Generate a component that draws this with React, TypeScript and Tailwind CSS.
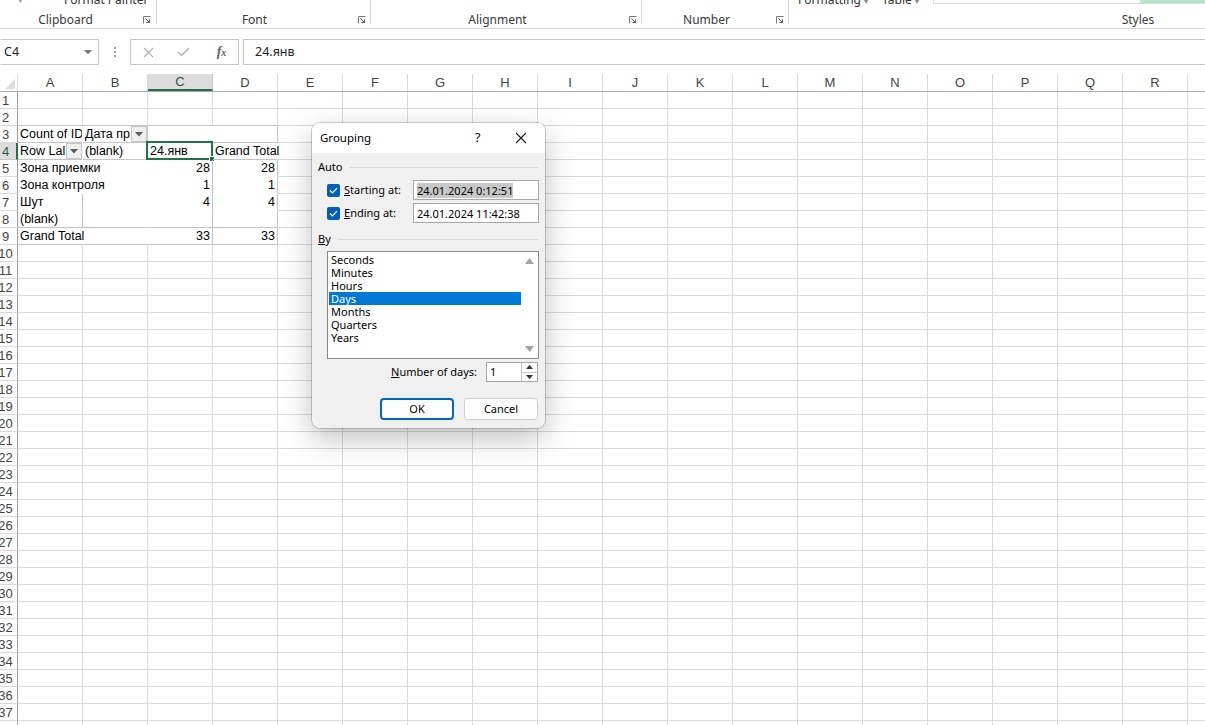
import React from "react";

const COLS = ["A","B","C","D","E","F","G","H","I","J","K","L","M","N","O","P","Q","R","S"];
const ROWS = Array.from({ length: 38 }, (_, i) => i + 1);

const R_GRID = "border-r border-r-[#dadada]";
const R_PIV = "border-r border-r-[#c4c4c4]";
const R_NONE = "border-r border-r-transparent";
const B_GRID = "border-b border-b-[#dadada]";
const B_PIV = "border-b border-b-[#c4c4c4]";
const B_NONE = "border-b border-b-transparent";

type CellDef = { text: string; right?: boolean; dd?: boolean; clip?: boolean; sel?: boolean };

const PIVOT: Record<string, CellDef> = {
  "3-0": { text: "Count of ID", clip: true },
  "3-1": { text: "Дата пр", clip: true, dd: true },
  "4-0": { text: "Row Lal", clip: true, dd: true },
  "4-1": { text: "(blank)" },
  "4-2": { text: "24.янв", sel: true },
  "4-3": { text: "Grand Total" },
  "5-0": { text: "Зона приемки" },
  "5-2": { text: "28", right: true },
  "5-3": { text: "28", right: true },
  "6-0": { text: "Зона контроля" },
  "6-2": { text: "1", right: true },
  "6-3": { text: "1", right: true },
  "7-0": { text: "Шут" },
  "7-2": { text: "4", right: true },
  "7-3": { text: "4", right: true },
  "8-0": { text: "(blank)" },
  "9-0": { text: "Grand Total" },
  "9-2": { text: "33", right: true },
  "9-3": { text: "33", right: true },
};

function inPivot(r: number, c: number) {
  return r >= 3 && r <= 9 && c <= 3;
}

function rightCls(r: number, c: number) {
  if (!inPivot(r, c)) return R_GRID;
  if (c === 3) return r === 4 ? R_NONE : R_PIV;
  if (c === 2) return r >= 4 ? R_PIV : R_NONE;
  if (c === 1) return r === 3 ? R_PIV : R_NONE;
  if (r === 7 || r === 8) return R_PIV;
  return R_NONE;
}

function bottomCls(r: number, c: number) {
  if (r === 2 && c <= 3) return B_PIV;
  if (!inPivot(r, c)) return B_GRID;
  if (r === 3 || r === 4 || r === 8 || r === 9) return B_PIV;
  return B_NONE;
}

function DropBtn() {
  return (
    <div className="w-[16px] h-[16px] shrink-0 bg-[#efefef] border border-[#c8c8c8] flex items-center justify-center">
      <svg width="8" height="5" viewBox="0 0 8 5">
        <polygon points="0,0 8,0 4,4.5" fill="#5a5a5a" />
      </svg>
    </div>
  );
}

function Launcher() {
  return (
    <svg width="8" height="8" viewBox="0 0 8 8" className="shrink-0">
      <path d="M0.5 7.5V0.5H7.5" fill="none" stroke="#7a7a7a" strokeWidth="1" />
      <path d="M2.5 2.5L6.5 6.5M6.5 3.5V6.5H3.5" fill="none" stroke="#5a5a5a" strokeWidth="1" />
    </svg>
  );
}

function Ribbon() {
  return (
    <div className="h-[29px] border-b border-b-[#d6d6d6] flex font-['Noto_Sans'] text-[12px] text-[#3a3a3a]">
      {/* Clipboard */}
      <div className="w-[157px] flex shrink-0">
        <div className="flex-1 flex flex-col h-[28px]">
          <div className="h-[12px]">
            <div className="flex items-center -mt-[9px] whitespace-nowrap">
              <div className="w-[48px] shrink-0 pl-[18px] text-[#9a9a9a] text-[9px]">▾</div>
              <svg width="10" height="12" viewBox="0 0 10 12" className="shrink-0">
                <path d="M3 0h4v6H3z" fill="#f0a030" />
              </svg>
              <span className="ml-[6px] text-[#333] whitespace-nowrap">Format Painter</span>
            </div>
          </div>
          <div className="h-[16px] flex items-center">
            <div className="flex-1 text-center pr-[12px] leading-[16px]">Clipboard</div>
            <div className="mr-[5px]"><Launcher /></div>
          </div>
        </div>
        <div className="w-px h-[24px] bg-[#d6d6d6]" />
      </div>
      {/* Font */}
      <div className="w-[214px] flex shrink-0">
        <div className="flex-1 flex flex-col h-[28px]">
          <div className="h-[12px]" />
          <div className="h-[16px] flex items-center">
            <div className="flex-1 text-center pr-[6px] leading-[16px]">Font</div>
            <div className="mr-[4px]"><Launcher /></div>
          </div>
        </div>
        <div className="w-px h-[24px] bg-[#d6d6d6]" />
      </div>
      {/* Alignment */}
      <div className="w-[271px] flex shrink-0">
        <div className="flex-1 flex flex-col h-[28px]">
          <div className="h-[12px]" />
          <div className="h-[16px] flex items-center">
            <div className="flex-1 text-center pr-[5px] leading-[16px]">Alignment</div>
            <div className="mr-[4px]"><Launcher /></div>
          </div>
        </div>
        <div className="w-px h-[24px] bg-[#d6d6d6]" />
      </div>
      {/* Number */}
      <div className="w-[147px] flex shrink-0">
        <div className="flex-1 flex flex-col h-[28px]">
          <div className="h-[12px]" />
          <div className="h-[16px] flex items-center">
            <div className="flex-1 text-center pr-[5px] leading-[16px]">Number</div>
            <div className="mr-[4px]"><Launcher /></div>
          </div>
        </div>
        <div className="w-px h-[24px] bg-[#d6d6d6]" />
      </div>
      {/* Styles */}
      <div className="flex-1 flex flex-col h-[28px]">
        <div className="h-[12px] flex items-start">
          <div className="flex items-center -mt-[9px] ml-[9px] gap-[14px] text-[#333] whitespace-nowrap">
            <span>Formatting <span className="text-[8px] text-[#888]">▾</span></span>
            <span>Table <span className="text-[8px] text-[#888]">▾</span></span>
          </div>
          <div className="ml-[14px] flex-1 h-[4px] border-l border-b border-[#dcdcdc] flex justify-end">
            <div className="w-[65px] h-[3px] bg-[#b5e3c8]" />
          </div>
        </div>
        <div className="h-[16px] leading-[16px] text-center pl-[282px]">Styles</div>
      </div>
    </div>
  );
}

function FormulaBar() {
  return (
    <div className="h-[45px] pt-[10px] flex items-start font-['Noto_Sans'] text-[12.5px] text-[#222]">
      <div className="w-[99px] h-[26px] border border-[#c6c6c6] border-l-transparent flex items-center pl-[3px] shrink-0">
        <span className="flex-1">C4</span>
        <svg width="8" height="5" viewBox="0 0 8 5" className="mr-[6px]">
          <polygon points="0,0 8,0 4,4.5" fill="#777" />
        </svg>
      </div>
      <div className="w-[31px] h-[26px] flex flex-col items-center justify-center gap-[2px] shrink-0">
        <div className="w-[2px] h-[2px] bg-[#a0a0a0]" />
        <div className="w-[2px] h-[2px] bg-[#a0a0a0]" />
        <div className="w-[2px] h-[2px] bg-[#a0a0a0]" />
      </div>
      <div className="w-[109px] h-[26px] border border-[#c6c6c6] flex items-center shrink-0">
        <div className="w-[35px] flex justify-center">
          <svg width="11" height="11" viewBox="0 0 11 11">
            <path d="M1 1L10 10M10 1L1 10" stroke="#b4b4b4" strokeWidth="1.3" />
          </svg>
        </div>
        <div className="w-[35px] flex justify-center">
          <svg width="13" height="10" viewBox="0 0 13 10">
            <path d="M1 5L4.5 8.5L12 1" fill="none" stroke="#b4b4b4" strokeWidth="1.5" />
          </svg>
        </div>
        <div className="flex-1 flex justify-center pl-[4px]">
          <span className="font-['Liberation_Serif'] italic font-bold text-[14px] text-[#666] leading-none">
            f<span className="text-[10px]">x</span>
          </span>
        </div>
      </div>
      <div className="ml-[4px] flex-1 h-[26px] border border-[#c6c6c6] border-r-transparent flex items-center pl-[11px]">
        24.янв
      </div>
    </div>
  );
}

function ColumnHeader() {
  return (
    <div className="flex h-[18px] border-b border-b-[#ababab] font-['Liberation_Sans'] text-[13px] text-[#444]">
      <div className="w-[18px] shrink-0 border-r border-r-[#dadada] flex items-end justify-end pr-[2px] pb-[2px]">
        <svg width="10" height="10" viewBox="0 0 10 10">
          <polygon points="10,0 10,10 0,10" fill="#dcdcdc" />
        </svg>
      </div>
      {COLS.map((c) =>
        c === "C" ? (
          <div key={c} className="w-[65px] shrink-0 h-[17px] bg-[#dcdcdc] border-r border-r-[#c6c6c6] border-b-2 border-b-[#217346] flex items-center justify-center text-[#1e5e3a] leading-none">
            {c}
          </div>
        ) : (
          <div key={c} className="w-[65px] shrink-0 h-[17px] border-r border-r-[#dadada] flex items-center justify-center leading-none">
            {c}
          </div>
        )
      )}
    </div>
  );
}

function GridRow({ r }: { r: number }) {
  const selRow = r === 4;
  return (
    <div className="flex h-[17px] font-['Liberation_Sans'] text-[12.5px] text-black">
      <div
        className={
          selRow
            ? "w-[18px] shrink-0 bg-[#dcdcdc] border-r-2 border-r-[#217346] border-b border-b-[#c6c6c6] flex items-center overflow-visible"
            : "w-[18px] shrink-0 border-r border-r-[#9f9f9f] border-b border-b-[#dadada] flex items-center overflow-visible"
        }
      >
        <div
          className={
            selRow
              ? "w-[11px] flex justify-center text-[13px] text-[#1e5e3a] leading-none whitespace-nowrap"
              : "w-[11px] flex justify-center text-[13px] text-[#444] leading-none whitespace-nowrap"
          }
        >
          {r}
        </div>
      </div>
      {COLS.map((_, c) => {
        const def = PIVOT[`${r}-${c}`];
        const cls = `w-[65px] shrink-0 relative flex items-center ${rightCls(r, c)} ${bottomCls(r, c)}`;
        if (!def) return <div key={c} className={cls} />;
        return (
          <div key={c} className={cls}>
            {def.right ? (
              <div className="flex-1 text-right pr-[2px] leading-[16px] whitespace-nowrap">{def.text}</div>
            ) : def.clip ? (
              <div className="flex-1 overflow-hidden pl-[2px] leading-[16px] whitespace-nowrap">{def.text}</div>
            ) : (
              <div className="flex-1 pl-[2px] leading-[16px] whitespace-nowrap overflow-visible">{def.text}</div>
            )}
            {def.dd && <DropBtn />}
            {def.sel && (
              <>
                <div className="absolute -left-[2px] -top-[2px] w-[67px] h-[19px] border-2 border-[#217346] pointer-events-none" />
                <div className="absolute -right-[3px] -bottom-[3px] w-[6px] h-[6px] bg-[#217346] border border-white" />
              </>
            )}
          </div>
        );
      })}
    </div>
  );
}

function Check() {
  return (
    <div className="w-[13px] h-[13px] rounded-[2px] bg-[#005fb8] flex items-center justify-center shrink-0">
      <svg width="9" height="7" viewBox="0 0 9 7">
        <path d="M1 3.5L3.4 5.8L8 1.2" fill="none" stroke="white" strokeWidth="1.2" />
      </svg>
    </div>
  );
}

function Dialog() {
  const items = ["Seconds", "Minutes", "Hours", "Days", "Months", "Quarters", "Years"];
  return (
    <div className="absolute left-[312px] top-[123px] w-[233px] h-[305px] rounded-[8px] bg-[#f0f0f0] overflow-hidden shadow-[0_0_0_1px_rgba(0,0,0,0.18),0_10px_30px_rgba(0,0,0,0.25)] font-['Noto_Sans'] text-[11px] text-black">
      <div className="h-[30px] bg-white flex items-center pl-[8px]">
        <span className="flex-1 text-[11.5px]">Grouping</span>
        <span className="w-[10px] mr-[30px] text-[12.5px]">?</span>
        <svg width="12" height="12" viewBox="0 0 12 12" className="mr-[18px]">
          <path d="M1 1L11 11M11 1L1 11" stroke="#1a1a1a" strokeWidth="1.1" />
        </svg>
      </div>
      <div className="flex flex-col">
        <div className="mt-[6px] h-[16px] flex items-center pl-[6px] pr-[7px]">
          <span className="leading-[16px]">Auto</span>
          <div className="flex-1 ml-[7px] h-px bg-[#d8d8d8]" />
        </div>
        <div className="mt-[5px] h-[20px] flex items-center pl-[15px]">
          <Check />
          <span className="ml-[4px] w-[69px]">
            <span className="underline">S</span>tarting at:
          </span>
          <div className="w-[126px] h-[20px] border border-[#a8a8a8] bg-white flex items-center pl-[3px]">
            <span className="bg-[#c8c8c8] leading-[15px]">24.01.2024 0:12:51</span>
          </div>
        </div>
        <div className="mt-[3px] h-[20px] flex items-center pl-[15px]">
          <Check />
          <span className="ml-[4px] w-[69px]">
            <span className="underline">E</span>nding at:
          </span>
          <div className="w-[126px] h-[20px] border border-[#a8a8a8] bg-white flex items-center pl-[3px]">
            <span className="leading-[15px]">24.01.2024 11:42:38</span>
          </div>
        </div>
        <div className="mt-[8px] h-[16px] flex items-center pl-[6px] pr-[7px]">
          <span className="leading-[16px]"><span className="underline">B</span>y</span>
          <div className="flex-1 ml-[7px] h-px bg-[#d8d8d8]" />
        </div>
        <div className="mt-[4px] ml-[15px] w-[212px] h-[108px] border border-[#8a8a8a] bg-white flex">
          <div className="flex-1 pt-[1px] pl-[1px] text-[11px]">
            {items.map((it) =>
              it === "Days" ? (
                <div key={it} className="h-[13px] leading-[13px] pl-[2px] bg-[#0078d7] text-white">
                  {it}
                </div>
              ) : (
                <div key={it} className="h-[13px] leading-[13px] pl-[2px]">
                  {it}
                </div>
              )
            )}
          </div>
          <div className="w-[17px] flex flex-col items-center justify-between py-[6px]">
            <svg width="9" height="6" viewBox="0 0 9 6">
              <polygon points="0,6 9,6 4.5,0" fill="#a3a3a3" />
            </svg>
            <svg width="9" height="6" viewBox="0 0 9 6">
              <polygon points="0,0 9,0 4.5,6" fill="#a3a3a3" />
            </svg>
          </div>
        </div>
        <div className="mt-[3px] h-[20px] flex items-center justify-end pr-[7px]">
          <span className="mr-[9px]">
            <span className="underline">N</span>umber of days:
          </span>
          <div className="w-[52px] h-[20px] border border-[#a8a8a8] bg-white flex">
            <div className="flex-1 pl-[3px] leading-[18px]">1</div>
            <div className="w-[16px] flex flex-col border-l border-[#c8c8c8]">
              <div className="flex-1 flex items-center justify-center border-b border-[#c8c8c8]">
                <svg width="7" height="4" viewBox="0 0 7 4">
                  <polygon points="0,4 7,4 3.5,0" fill="#333" />
                </svg>
              </div>
              <div className="flex-1 flex items-center justify-center">
                <svg width="7" height="4" viewBox="0 0 7 4">
                  <polygon points="0,0 7,0 3.5,4" fill="#333" />
                </svg>
              </div>
            </div>
          </div>
        </div>
        <div className="mt-[16px] h-[22px] flex pl-[68px]">
          <div className="w-[74px] h-[22px] rounded-[4px] border-2 border-[#0067c0] bg-white flex items-center justify-center">
            OK
          </div>
          <div className="ml-[10px] w-[74px] h-[22px] rounded-[4px] border border-[#cfcfcf] bg-[#fdfdfd] flex items-center justify-center">
            Cancel
          </div>
        </div>
      </div>
    </div>
  );
}

export default function App() {
  return (
    <div className="w-[1205px] h-[725px] overflow-hidden bg-white relative">
      <Ribbon />
      <FormulaBar />
      <ColumnHeader />
      {ROWS.map((r) => (
        <GridRow key={r} r={r} />
      ))}
      <Dialog />
    </div>
  );
}
